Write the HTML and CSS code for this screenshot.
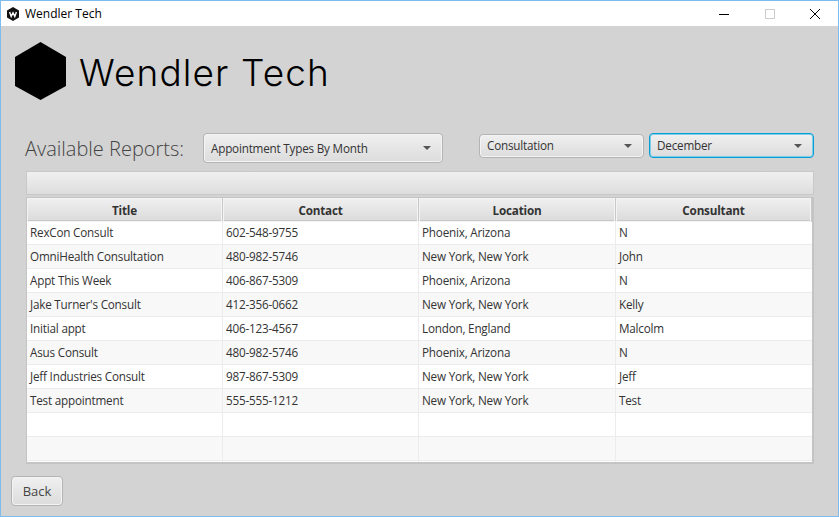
FILE: index.html
```html
<!DOCTYPE html>
<html lang="en">

<head>
    <meta charset="UTF-8">
    <meta name="viewport" content="width=device-width, initial-scale=1.0">
    <title>Wendler Tech</title>
    <link rel="stylesheet" href="styles.css">
</head>

<body>
    <div class="window">
        <div class="titlebar">
            <svg class="app-icon" width="14" height="14" viewBox="0 0 14 14">
                <polygon points="7,0 13,3.5 13,10.5 7,14 1,10.5 1,3.5" fill="#111" />
                <path d="M3.6 5 L5.2 9.4 L7 5.8 L8.8 9.4 L10.4 5" fill="none" stroke="#fff" stroke-width="1.4" />
            </svg>
            <span class="app-name">Wendler Tech</span>
            <div class="win-buttons">
                <svg width="10" height="10" viewBox="0 0 10 10">
                    <path d="M0 5.5 H10" stroke="#000" stroke-width="1" />
                </svg>
                <svg width="10" height="10" viewBox="0 0 10 10">
                    <rect x="0.5" y="0.5" width="9" height="9" fill="none" stroke="#ccc" stroke-width="1" />
                </svg>
                <svg width="10" height="10" viewBox="0 0 10 10">
                    <path d="M0 0 L10 10 M10 0 L0 10" stroke="#000" stroke-width="1" />
                </svg>
            </div>
        </div>

        <main class="content">
            <div class="logo">
                <svg width="51" height="58" viewBox="0 0 51 58">
                    <polygon points="25.5,0 51,15 51,44 25.5,58 0,44 0,15" fill="#000" />
                </svg>
                <span class="logo-text">Wendler Tech</span>
            </div>

            <div class="filters">
                <span class="reports-label">Available Reports:</span>
                <div class="combo combo-report">Appointment Types By Month<i class="arrow"></i></div>
                <div class="combo combo-type">Consultation<i class="arrow"></i></div>
                <div class="combo combo-month">December<i class="arrow"></i></div>
            </div>

            <div class="toolbar"></div>

            <div class="table">
                <div class="row head">
                    <div>Title</div>
                    <div>Contact</div>
                    <div>Location</div>
                    <div>Consultant</div>
                </div>
                <div class="row">
                    <div>RexCon Consult</div>
                    <div>602-548-9755</div>
                    <div>Phoenix, Arizona</div>
                    <div>N</div>
                </div>
                <div class="row">
                    <div>OmniHealth Consultation</div>
                    <div>480-982-5746</div>
                    <div>New York, New York</div>
                    <div>John</div>
                </div>
                <div class="row">
                    <div>Appt This Week</div>
                    <div>406-867-5309</div>
                    <div>Phoenix, Arizona</div>
                    <div>N</div>
                </div>
                <div class="row">
                    <div>Jake Turner's Consult</div>
                    <div>412-356-0662</div>
                    <div>New York, New York</div>
                    <div>Kelly</div>
                </div>
                <div class="row">
                    <div>Initial appt</div>
                    <div>406-123-4567</div>
                    <div>London, England</div>
                    <div>Malcolm</div>
                </div>
                <div class="row">
                    <div>Asus Consult</div>
                    <div>480-982-5746</div>
                    <div>Phoenix, Arizona</div>
                    <div>N</div>
                </div>
                <div class="row">
                    <div>Jeff Industries Consult</div>
                    <div>987-867-5309</div>
                    <div>New York, New York</div>
                    <div>Jeff</div>
                </div>
                <div class="row">
                    <div>Test appointment</div>
                    <div>555-555-1212</div>
                    <div>New York, New York</div>
                    <div>Test</div>
                </div>
                <div class="row">
                    <div></div>
                    <div></div>
                    <div></div>
                    <div></div>
                </div>
                <div class="row">
                    <div></div>
                    <div></div>
                    <div></div>
                    <div></div>
                </div>
                <div class="row stub">
                    <div></div>
                    <div></div>
                    <div></div>
                    <div></div>
                </div>
            </div>

            <button class="back">Back</button>
        </main>
    </div>
</body>

</html>
```

FILE: styles.css
```css
* {
    box-sizing: border-box;
}

html,
body {
    margin: 0;
    overflow: hidden;
}

body {
    font-family: "Open Sans", "Noto Sans", sans-serif;
    color: #333;
}

.window {
    width: 839px;
    height: 517px;
    border: 1px solid #7fbbec;
    background: #d3d3d3;
    display: flex;
    flex-direction: column;
}

.titlebar {
    height: 25px;
    flex: none;
    background: #fff;
    display: flex;
    align-items: center;
    padding-left: 5px;
    color: #000;
}

.app-icon {
    display: block;
}

.app-name {
    margin-left: 5px;
    font-size: 12px;
}

.win-buttons {
    margin-left: auto;
    margin-right: 18px;
    display: flex;
    gap: 35.5px;
}

.win-buttons svg {
    display: block;
}

.content {
    flex: 1;
    padding: 16px 0 0 10px;
    display: flex;
    flex-direction: column;
}

.logo {
    display: flex;
    align-items: center;
    margin-left: 4px;
    height: 58px;
}

.logo-text {
    margin: 3px 0 0 13px;
    font-family: Inter, "Open Sans", sans-serif;
    font-weight: 300;
    font-size: 37px;
    letter-spacing: 1.1px;
    color: #000;
}

.filters {
    display: flex;
    align-items: flex-start;
    margin-top: 33px;
    height: 30px;
    font-size: 11.7px;
    letter-spacing: -0.2px;
}

.reports-label {
    margin-left: 14px;
    width: 178px;
    font-size: 20px;
    letter-spacing: 0;
    font-weight: 300;
    line-height: 32px;
    color: #444;
}

.combo {
    display: flex;
    align-items: center;
    padding: 0 11px 2px 7px;
    color: #333;
    border: 1px solid #b4b4b4;
    border-radius: 4px;
    background: linear-gradient(#f0f0f0, #dcdcdc);
    box-shadow: inset 0 0 0 1px #f4f4f4;
}

.arrow {
    margin: 2px 0 0 auto;
    width: 0;
    height: 0;
    border-left: 4px solid transparent;
    border-right: 4px solid transparent;
    border-top: 4px solid #555;
}

.combo-report {
    width: 240px;
    height: 30px;
    padding-bottom: 0;
}

.combo-report .arrow {
    margin-top: 0;
}

.combo-type {
    width: 165px;
    height: 24px;
    margin: 1px 0 0 36px;
}

.combo-month {
    width: 165px;
    height: 25px;
    margin-left: 5px;
    border-color: #039ed3;
    box-shadow: 0 0 0 1px #7fcdea inset;
}

.toolbar {
    width: 788px;
    height: 24px;
    margin: 8px 0 0 15px;
    border: 1px solid #c8c8c8;
    background: linear-gradient(#f0f0f0, #dddddd);
    flex: none;
}

.table {
    width: 788px;
    height: 267px;
    margin: 2px 0 0 15px;
    border: 1px solid #c4c4c4;
    border-width: 1px 2px 2px 1px;
    background: #fff;
    overflow: hidden;
    flex: none;
}

.row {
    display: grid;
    grid-template-columns: 196px 196px 197px 1fr;
    height: 24px;
    font-size: 11.7px;
    letter-spacing: -0.2px;
    line-height: 23px;
    background: #fff;
    border-bottom: 1px solid #ececec;
}

.row:nth-child(odd) {
    background: #f8f8f8;
}

.row>div {
    padding-left: 3px;
    border-right: 1px solid #ececec;
    white-space: nowrap;
}

.row>div:last-child {
    border-right: none;
}

.row.head {
    height: 23px;
    background: linear-gradient(#f0f0f0, #dcdcdc);
    border-bottom: 1px solid #c8c8c8;
    font-weight: 700;
    line-height: 24px;
}

.row.head>div {
    padding-left: 0;
    text-align: center;
    border-right: 1px solid #c8c8c8;
    box-shadow: inset 0 0 0 1px #f4f4f4;
}

.row.stub {
    height: 3px;
}

.back {
    display: block;
    width: 52px;
    height: 30px;
    margin-top: 12px;
    padding: 0;
    font-family: inherit;
    font-size: 13px;
    color: #444;
    border: 1px solid #b4b4b4;
    border-radius: 4px;
    background: linear-gradient(#f0f0f0, #dcdcdc);
    box-shadow: inset 0 0 0 1px #f4f4f4;
}
```
